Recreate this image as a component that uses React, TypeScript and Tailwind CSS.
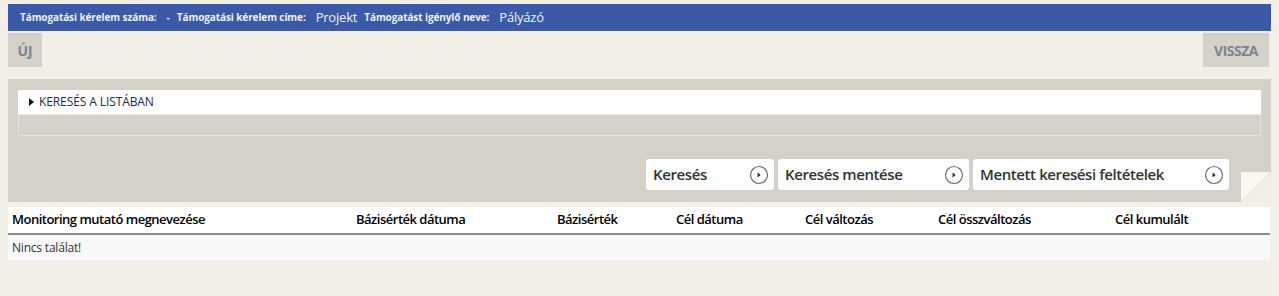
import React from "react";

function PlayCircle() {
  return (
    <svg width="20" height="20" viewBox="0 0 20 20" className="shrink-0">
      <circle cx="10" cy="10" r="8.5" fill="white" stroke="#6b6b6b" strokeWidth="1.2" />
      <polygon points="8.6,7.6 11.6,10 8.6,12.4" fill="#222" />
    </svg>
  );
}

function ActionButton({ label, w }: { label: string; w: string }) {
  return (
    <div className={`${w} h-[31px] bg-white rounded-[3px] flex items-center justify-between pl-[7px] pr-[5px]`}>
      <span className="text-[15px] font-semibold text-[#333] tracking-[-0.4px]">{label}</span>
      <PlayCircle />
    </div>
  );
}

export default function App() {
  const cols = [
    { t: "Monitoring mutató megnevezése", w: "w-[344px]" },
    { t: "Bázisérték dátuma", w: "w-[201px]" },
    { t: "Bázisérték", w: "w-[119px]" },
    { t: "Cél dátuma", w: "w-[129px]" },
    { t: "Cél változás", w: "w-[133px]" },
    { t: "Cél összváltozás", w: "w-[177px]" },
    { t: "Cél kumulált", w: "flex-1" },
  ];
  return (
    <div
      className="w-full h-[296px] bg-[#f2efe8] px-2 pt-1"
      style={{ fontFamily: '"Open Sans", "Noto Sans", sans-serif' }}
    >
      <div className="h-[27px] bg-[#3a5aa8] flex items-center pl-[12px] text-[#eef0f7] whitespace-nowrap">
        <span className="text-[10px] font-bold tracking-[-0.1px]">Támogatási kérelem száma:</span>
        <span className="text-[10px] font-bold ml-[10px]">-</span>
        <span className="text-[10px] font-bold ml-[7px] tracking-[-0.1px]">Támogatási kérelem címe:</span>
        <span className="text-[13px] ml-[10px] tracking-[-0.2px]">Projekt</span>
        <span className="text-[10px] font-bold ml-[7px] tracking-[-0.1px]">Támogatást igénylő neve:</span>
        <span className="text-[13px] ml-[10px] tracking-[-0.2px]">Pályázó</span>
      </div>

      <div className="mt-[2px] flex justify-between pr-[2px]">
        <div className="w-[34px] h-[34px] bg-[#d4d1c9] flex items-center justify-center text-[14px] font-bold text-[#7d858c]">
          ÚJ
        </div>
        <div className="w-[66px] h-[34px] bg-[#d4d1c9] flex items-center justify-center text-[14px] font-bold text-[#7d858c] tracking-[-0.5px]">
          VISSZA
        </div>
      </div>

      <div className="relative mt-[12px] h-[123px] bg-[#d4d1c9] pt-[11px] px-[10px]">
        <div className="h-[24px] bg-white flex items-center pl-[11px]">
          <svg width="6" height="8" viewBox="0 0 6 8" className="mr-[4px]">
            <polygon points="0,0 5,4 0,8" fill="#111" />
          </svg>
          <span className="text-[12px] text-[#1b2b4b] tracking-[-0.1px]">KERESÉS A LISTÁBAN</span>
        </div>
        <div className="h-[22px] border border-[#e6e3dc] border-t-[#ebe9e3]" />
        <div className="mt-[23px] flex justify-end gap-[4px] pr-[32px]">
          <ActionButton label="Keresés" w="w-[128px]" />
          <ActionButton label="Keresés mentése" w="w-[191px]" />
          <ActionButton label="Mentett keresési feltételek" w="w-[256px]" />
        </div>
        <svg width="30" height="30" viewBox="0 0 30 30" className="absolute right-0 bottom-0">
          <rect x="0" y="0" width="30" height="30" fill="#f2efe8" />
          <polygon points="0,0 30,0 0,30" fill="#f8f7f4" />
          <line x1="30" y1="0" x2="0" y2="30" stroke="#e2dfd8" strokeWidth="1" />
        </svg>
      </div>

      <div className="mt-[5px] mr-[1px]">
        <div className="h-[28px] bg-white border-b-2 border-[#8a8a8a] flex items-center pl-[4px]">
          {cols.map((c) => (
            <div key={c.t} className={`${c.w} text-[13px] font-semibold text-black tracking-[-0.5px] whitespace-nowrap`}>
              {c.t}
            </div>
          ))}
        </div>
        <div className="h-[25px] bg-[#f8f8f8] flex items-center pl-[4px] text-[12px] text-[#333] tracking-[-0.2px]">
          Nincs találat!
        </div>
      </div>
    </div>
  );
}
